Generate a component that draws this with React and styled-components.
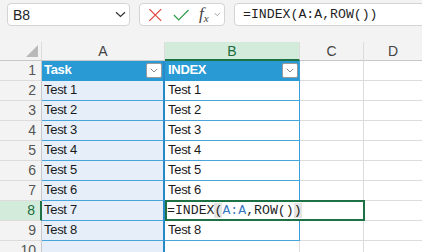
import React from "react";
import styled, { createGlobalStyle, css } from "styled-components";

const GlobalStyle = createGlobalStyle`
  html, body {
    margin: 0;
    padding: 0;
    background: #f3f3f3;
    overflow: hidden;
  }
  body {
    font-family: "Liberation Sans", Arial, sans-serif;
  }
`;

const tasks = ["Test 1", "Test 2", "Test 3", "Test 4", "Test 5", "Test 6", "Test 7", "Test 8"];
const ACTIVE_ROW = 8;

export default function App() {
  const rows = [];
  for (let r = 1; r <= 10; r++) rows.push(r);

  return (
    <Page>
      <GlobalStyle />
      <FormulaBar>
        <NameBox>
          <span>B8</span>
          <svg width="11" height="7" viewBox="0 0 11 7">
            <path d="M1 1.2 L5.5 5.5 L10 1.2" fill="none" stroke="#333" strokeWidth="1.2" />
          </svg>
        </NameBox>
        <FxBox>
          <svg width="16" height="16" viewBox="0 0 16 16">
            <path d="M1.5 1.5 L14.5 14.5 M14.5 1.5 L1.5 14.5" stroke="#e0443e" strokeWidth="1.3" />
          </svg>
          <svg width="18" height="14" viewBox="0 0 18 14">
            <path d="M1 7 L6.3 12.5 L17 1.5" fill="none" stroke="#2e9a4c" strokeWidth="1.3" />
          </svg>
          <FxLabel>
            f<sub>x</sub>
          </FxLabel>
          <svg width="7" height="5" viewBox="0 0 7 5">
            <path d="M0.8 1 L3.5 3.8 L6.2 1" fill="none" stroke="#999" strokeWidth="1" />
          </svg>
        </FxBox>
        <FormulaInput>=INDEX(A:A,ROW())</FormulaInput>
      </FormulaBar>

      <Grid>
        <Corner>
          <svg width="12" height="12" viewBox="0 0 12 12">
            <path d="M12 0 L12 12 L0 12 Z" fill="#b9b9b9" />
          </svg>
        </Corner>
        <ColHead>A</ColHead>
        <ColHead $active>B</ColHead>
        <ColHead>C</ColHead>
        <ColHead $last>D</ColHead>

        {rows.map((r) => {
          const active = r === ACTIVE_ROW;
          const header = r === 1;
          const inTable = r <= 9;
          return (
            <React.Fragment key={r}>
              <RowHead $active={active}>{r}</RowHead>
              <CellA $header={header}>
                {header ? "Task" : tasks[r - 2]}
                {header && <FilterButton />}
              </CellA>
              {active ? (
                <EditCell>
                  <Formula>
                    =INDEX<Paren>(</Paren>
                    <Ref>A:A</Ref>,ROW()<Paren>)</Paren>
                  </Formula>
                </EditCell>
              ) : (
                <CellB $header={header} $inTable={inTable}>
                  {header ? "INDEX" : r <= 9 ? tasks[r - 2] : ""}
                  {header && <FilterButton />}
                </CellB>
              )}
              {!active && <Cell />}
              <Cell $last />
            </React.Fragment>
          );
        })}
      </Grid>
    </Page>
  );
}

function FilterButton() {
  return (
    <DropButton>
      <svg width="8" height="5" viewBox="0 0 8 5">
        <path d="M0.8 0.8 L4 4 L7.2 0.8" fill="none" stroke="#8a8a8a" strokeWidth="1" />
      </svg>
    </DropButton>
  );
}

const Page = styled.div`
  width: 422px;
  height: 252px;
  overflow: hidden;
  background: #f3f3f3;
`;

const FormulaBar = styled.div`
  display: flex;
  align-items: flex-start;
  gap: 9px;
  height: 42px;
  padding: 3px 0 0 7px;
  box-sizing: border-box;
`;

const boxBase = css`
  height: 23px;
  box-sizing: border-box;
  background: #fff;
  border: 1px solid #d4d4d4;
  border-radius: 4px;
  display: flex;
  align-items: center;
`;

const NameBox = styled.div`
  ${boxBase};
  width: 123px;
  padding: 0 3px 0 5px;
  justify-content: space-between;
  font-size: 14px;
  color: #1f1f1f;
`;

const FxBox = styled.div`
  ${boxBase};
  width: 86px;
  padding: 0 4px 0 8px;
  gap: 10px;
`;

const FxLabel = styled.span`
  font-family: "Liberation Serif", "Times New Roman", serif;
  font-style: italic;
  font-size: 17px;
  line-height: 1;
  color: #444;
  margin-right: -5px;
  sub {
    font-size: 11px;
    vertical-align: -3px;
  }
`;

const FormulaInput = styled.div`
  ${boxBase};
  flex: 1;
  margin-right: -10px;
  padding-left: 8px;
  font-family: "Liberation Mono", "Courier New", monospace;
  font-size: 13.2px;
  color: #1f1f1f;
`;

const Grid = styled.div`
  display: grid;
  grid-template-columns: 42px 123px 135px 64px 1fr;
  grid-template-rows: 19px repeat(10, 20px);
  background: #fff;
  font-size: 13px;
  letter-spacing: -0.3px;
`;

const Corner = styled.div`
  background: #f3f3f3;
  border-right: 1px solid #dcdcdc;
  border-bottom: 1px solid #c8c8c8;
  display: flex;
  align-items: flex-end;
  justify-content: flex-end;
  padding: 0 3px 3px 0;
`;

const ColHead = styled.div`
  display: flex;
  align-items: center;
  justify-content: center;
  background: ${(p) => (p.$active ? "#d3ebdb" : "#f3f3f3")};
  color: ${(p) => (p.$active ? "#1a6b3c" : "#444")};
  border-right: ${(p) => (p.$last ? "none" : "1px solid #dcdcdc")};
  border-bottom: ${(p) => (p.$active ? "2px solid #1e7145" : "1px solid #c8c8c8")};
  font-size: 14px;
  letter-spacing: 0;
`;

const RowHead = styled.div`
  display: flex;
  align-items: flex-end;
  justify-content: flex-end;
  padding: 0 5px 2px 0;
  background: ${(p) => (p.$active ? "#d3ebdb" : "#f3f3f3")};
  color: ${(p) => (p.$active ? "#1a6b3c" : "#555")};
  border-right: ${(p) => (p.$active ? "2px solid #1e7145" : "1px solid #c8c8c8")};
  border-bottom: 1px solid #dcdcdc;
  font-size: 14px;
  letter-spacing: 0;
`;

const cellBase = css`
  position: relative;
  display: flex;
  align-items: flex-end;
  padding: 0 0 3px 2px;
  color: #1a1a1a;
  white-space: nowrap;
  box-sizing: border-box;
`;

const headerCell = css`
  background: #2a9ad4;
  color: #fff;
  font-weight: bold;
  border-bottom: 1px solid #2a9ad4;
`;

const CellA = styled.div`
  ${cellBase};
  background: #e5eef9;
  border-right: 2px solid #2789c8;
  border-bottom: 1px solid #47a5dc;
  ${(p) => p.$header && headerCell};
`;

const CellB = styled.div`
  ${cellBase};
  padding-left: 3px;
  background: #fff;
  border-right: 1px solid ${(p) => (p.$inTable ? "#3a9fd8" : "#dcdcdc")};
  border-bottom: 1px solid ${(p) => (p.$inTable ? "#47a5dc" : "#dcdcdc")};
  ${(p) => p.$header && headerCell};
`;

const Cell = styled.div`
  border-right: ${(p) => (p.$last ? "none" : "1px solid #dcdcdc")};
  border-bottom: 1px solid #dcdcdc;
`;

const EditCell = styled.div`
  grid-column: span 2;
  position: relative;
  display: flex;
  align-items: center;
  padding-left: 2px;
  background: #fff;
  border-bottom: 1px solid #dcdcdc;
  &::after {
    content: "";
    position: absolute;
    top: -1px;
    left: 0;
    right: -1px;
    bottom: -1px;
    border: 2px solid #1e7145;
    pointer-events: none;
  }
`;

const Formula = styled.span`
  font-family: "Liberation Mono", "Courier New", monospace;
  font-size: 13.2px;
  letter-spacing: 0;
  color: #1f1f1f;
`;

const Paren = styled.span`
  background: #e4e4e4;
`;

const Ref = styled.span`
  color: #3a78c3;
`;

const DropButton = styled.span`
  position: absolute;
  right: 1px;
  top: 2px;
  width: 16px;
  height: 15px;
  box-sizing: border-box;
  background: #fff;
  border: 1px solid #9a9a9a;
  border-radius: 2px;
  display: flex;
  align-items: center;
  justify-content: center;
`;
